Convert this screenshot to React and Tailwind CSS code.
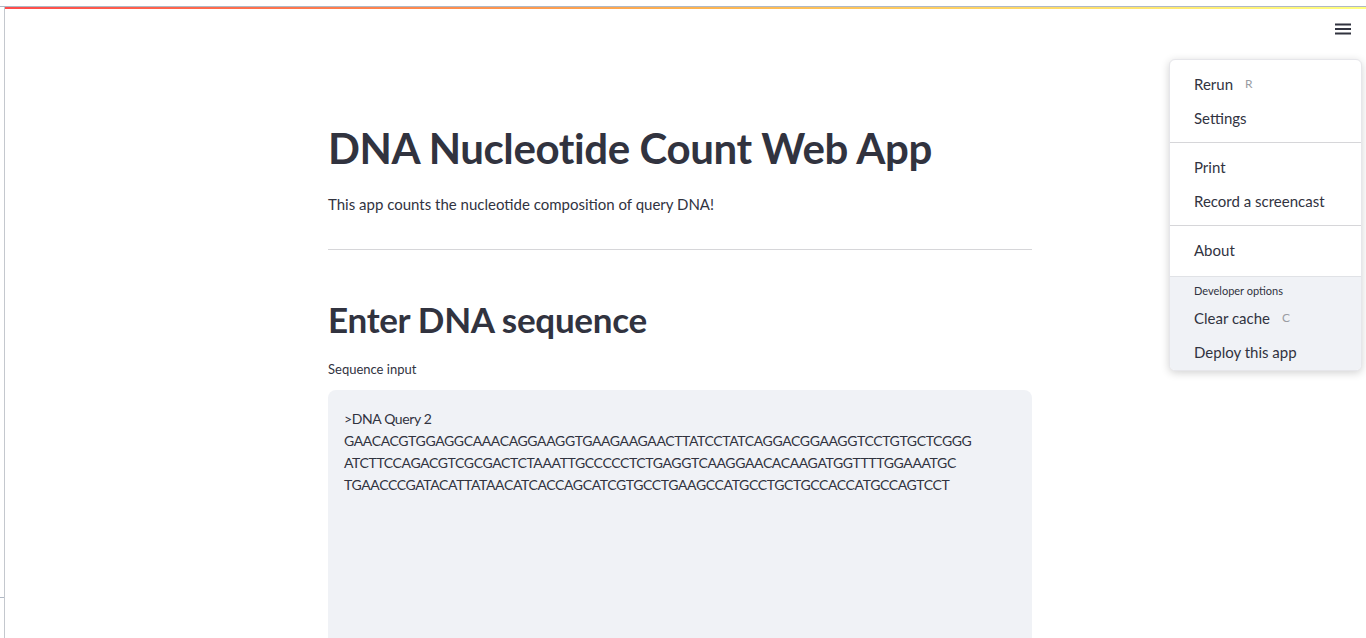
import { useState } from "react";

const seq = `>DNA Query 2
GAACACGTGGAGGCAAACAGGAAGGTGAAGAAGAACTTATCCTATCAGGACGGAAGGTCCTGTGCTCGGG
ATCTTCCAGACGTCGCGACTCTAAATTGCCCCCTCTGAGGTCAAGGAACACAAGATGGTTTTGGAAATGC
TGAACCCGATACATTATAACATCACCAGCATCGTGCCTGAAGCCATGCCTGCTGCCACCATGCCAGTCCT`;

function MenuItem({ label, hint }) {
  return (
    <div className="flex items-center h-[34px] px-6 text-[15px] text-[#31333f]">
      <span>{label}</span>
      {hint && <span className="ml-3 text-[12px] text-[#9a9ca3]">{hint}</span>}
    </div>
  );
}

export default function App() {
  const [text, setText] = useState(seq);

  return (
    <div className="h-[638px] w-[1366px] overflow-hidden bg-white relative" style={{ fontFamily: "Lato, 'Open Sans', sans-serif" }}>
      <div className="h-[6px] bg-white" />
      <div className="h-px bg-[#b0b8c4]" />
      <div className="flex h-[631px]">
        <div className="w-[4px] shrink-0 flex flex-col">
          <div className="h-[590px]" />
          <div className="h-px bg-[#b0b8c4]" />
        </div>
        <div className="flex-1 border-l border-[#c4c8ce] flex flex-col">
          <div className="h-[2px] shrink-0 bg-[linear-gradient(90deg,#ff4b4b,#fdb250_50%,#ffff80)]" />
          <div className="flex justify-end pr-[14px] pt-[13px]">
            <svg width="18" height="14" viewBox="0 0 18 14">
              <rect x="1" y="1.5" width="16" height="2" fill="#31333f" />
              <rect x="1" y="6" width="16" height="2" fill="#31333f" />
              <rect x="1" y="10.5" width="16" height="2" fill="#31333f" />
            </svg>
          </div>
          <div className="w-[704px] ml-[323px] pt-[82px] text-[#31333f]">
            <h1 className="text-[42px] font-bold leading-[60px] tracking-[-0.4px]">DNA Nucleotide Count Web App</h1>
            <p className="mt-[14px] text-[15px] leading-[24px]">This app counts the nucleotide composition of query DNA!</p>
            <hr className="mt-[33px] border-t border-[#d6d6d9]" />
            <h2 className="mt-[47px] text-[35px] font-bold leading-[44px] tracking-[-0.3px]">Enter DNA sequence</h2>
            <label className="block mt-[19px] text-[13px] leading-[18px]">Sequence input</label>
            <textarea
              value={text}
              onChange={(e) => setText(e.target.value)}
              spellCheck={false}
              className="mt-[12px] w-full h-[260px] resize-y rounded-[8px] bg-[#f0f2f6] px-[16px] pt-[18px] text-[14px] leading-[22px] tracking-[-0.38px] text-[#31333f] outline-none"
            />
          </div>
        </div>
      </div>

      <div className="absolute left-[1169px] top-[59px] w-[193px] rounded-[6px] bg-white shadow-[0_2px_8px_rgba(0,0,0,0.18)] border border-[#e6e6ea] overflow-hidden">
        <div className="py-[7px]">
          <MenuItem label="Rerun" hint="R" />
          <MenuItem label="Settings" />
        </div>
        <div className="h-px bg-[#d6d6d9]" />
        <div className="py-[7px]">
          <MenuItem label="Print" />
          <MenuItem label="Record a screencast" />
        </div>
        <div className="h-px bg-[#d6d6d9]" />
        <div className="pt-[7px] pb-[9px]">
          <MenuItem label="About" />
        </div>
        <div className="bg-[#f0f2f6] border-t border-[#e0e2e6] pb-[1px]">
          <div className="px-6 pt-[7px] text-[11px] text-[#31333f] leading-[14px]">Developer options</div>
          <div className="pt-[3px]">
            <MenuItem label="Clear cache" hint="C" />
            <MenuItem label="Deploy this app" />
          </div>
        </div>
      </div>
    </div>
  );
}
